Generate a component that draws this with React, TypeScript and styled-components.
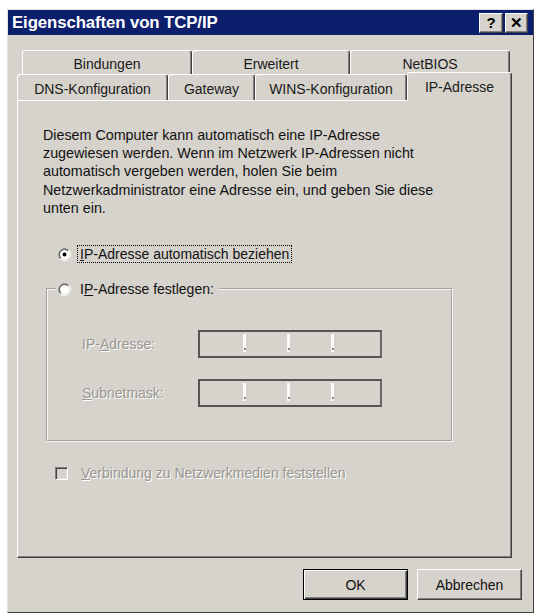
import React from "react";
import styled, { createGlobalStyle } from "styled-components";

const GlobalStyle = createGlobalStyle`
  html, body {
    margin: 0;
    padding: 0;
    background: #fff;
  }
  body {
    font-family: "Liberation Sans", Arial, sans-serif;
    font-size: 14px;
    color: #000;
  }
`;

const face = "#d6d3cc";
const disabledText = "#989691";

const Page = styled.div`
  padding: 9px 0 0 7px;
`;

const Window = styled.div`
  width: 527px;
  height: 604px;
  box-sizing: border-box;
  background: ${face};
  border: 1px solid;
  border-color: #e4e2dc #404040 #404040 #e4e2dc;
  display: flex;
  flex-direction: column;
`;

const TitleBar = styled.div`
  height: 25px;
  flex: none;
  background: #0b1f6d;
  display: flex;
  align-items: center;
  padding: 0 5px 0 4px;
`;

const Title = styled.span`
  flex: 1;
  color: #fff;
  font-weight: bold;
  font-size: 16.8px;
  letter-spacing: -0.1px;
`;

const CaptionButton = styled.button<{ $w: number }>`
  width: ${(p) => p.$w}px;
  height: 20px;
  box-sizing: border-box;
  padding: 0;
  margin-left: 2px;
  background: ${face};
  border: 1px solid;
  border-color: #fff #404040 #404040 #fff;
  box-shadow: inset -1px -1px #808080;
  font-family: "Liberation Sans", Arial, sans-serif;
  font-weight: bold;
  font-size: 15px;
  line-height: 16px;
  color: #000;
`;

const Body = styled.div`
  display: flex;
  flex-direction: column;
  padding: 15px 0 0 9px;
`;

const TabRow = styled.div<{ $indent?: number; $h: number }>`
  display: flex;
  align-items: flex-end;
  height: ${(p) => p.$h}px;
  margin-left: ${(p) => p.$indent ?? 0}px;
`;

const Tab = styled.div<{ $w: number; $h: number; $active?: boolean }>`
  box-sizing: border-box;
  width: ${(p) => p.$w}px;
  height: ${(p) => p.$h}px;
  display: flex;
  align-items: center;
  justify-content: center;
  padding-top: ${(p) => (p.$active ? 0 : 2)}px;
  background: ${face};
  border-top: 1px solid #fff;
  border-left: 1px solid #fff;
  border-right: 1px solid #404040;
  box-shadow: inset -1px 0 #808080;
  border-radius: 3px 3px 0 0;
  position: relative;
  z-index: ${(p) => (p.$active ? 2 : 1)};
  margin-bottom: ${(p) => (p.$active ? -1 : 0)}px;
  white-space: nowrap;
  color: #1a1a1a;
`;

const Panel = styled.div`
  width: 495px;
  height: 458px;
  box-sizing: border-box;
  border: 1px solid;
  border-color: #fff #404040 #404040 #fff;
  box-shadow: inset -1px -1px #808080;
  padding: 25px 20px 0 25px;
`;

const Intro = styled.p`
  margin: 0;
  font-size: 14.3px;
  line-height: 18.2px;
  color: #111;
`;

const OptionRow = styled.div<{ $top?: number; $indent: number; $gap: number }>`
  display: flex;
  align-items: center;
  height: 18px;
  margin-top: ${(p) => p.$top ?? 0}px;
  margin-left: ${(p) => p.$indent}px;
  gap: ${(p) => p.$gap}px;
`;

const OptionLabel = styled.span<{ $focus?: boolean; $disabled?: boolean }>`
  padding: 0 2px;
  line-height: 16px;
  border: 1px dotted ${(p) => (p.$focus ? "#000" : "transparent")};
  color: ${(p) => (p.$disabled ? disabledText : "#111")};
  text-shadow: ${(p) => (p.$disabled ? "1px 1px #fff" : "none")};
  white-space: nowrap;
`;

const Group = styled.fieldset`
  margin: 17px 0 0 3px;
  width: 407px;
  box-sizing: border-box;
  border: 2px groove #f6f6f6;
  padding: 32px 0 33px 8px;
  min-inline-size: 0;
`;

const Legend = styled.legend`
  padding: 0 2px;
`;

const FieldRow = styled.div`
  display: flex;
  align-items: center;
  margin-left: 26px;

  & + & {
    margin-top: 21px;
  }
`;

const FieldLabel = styled.span`
  width: 116px;
  color: ${disabledText};
  text-shadow: 1px 1px #fff;
`;

const IpField = styled.div`
  width: 184px;
  height: 28px;
  box-sizing: border-box;
  border: 2px solid;
  border-color: #555 #666 #555 #555;
  background: ${face};
  display: flex;
  align-items: flex-start;
  padding: 2px 0 0 43px;
  gap: 41px;
`;

const IpDot = styled.span`
  width: 3px;
  height: 18px;
  background: #fbfbfa;
  position: relative;

  &::after {
    content: "";
    position: absolute;
    left: 0.5px;
    bottom: 2px;
    width: 2px;
    height: 2px;
    background: #8a8a8a;
  }
`;

const CheckBox = styled.span`
  width: 13px;
  height: 13px;
  box-sizing: border-box;
  flex: none;
  border: 1px solid;
  border-color: #808080 #fff #fff #808080;
  box-shadow: inset 1px 1px #404040, inset -1px -1px #e0ddd6;
  background: ${face};
`;

const Footer = styled.div`
  display: flex;
  justify-content: flex-end;
  gap: 9px;
  margin-top: 11px;
  padding-right: 11px;
`;

const Button = styled.button<{ $default?: boolean }>`
  width: 105px;
  height: 31px;
  box-sizing: border-box;
  padding: 0;
  background: ${face};
  font-family: "Liberation Sans", Arial, sans-serif;
  font-size: 14px;
  color: #111;
  border: 1px solid;
  border-color: ${(p) => (p.$default ? "#000" : "#fff #404040 #404040 #fff")};
  box-shadow: ${(p) =>
    p.$default
      ? "inset 1px 1px #fff, inset -1px -1px #404040, inset -2px -2px #808080"
      : "inset -1px -1px #808080"};
`;

const Radio: React.FC<{ checked?: boolean }> = ({ checked }) => (
  <svg width="13" height="13" viewBox="0 0 13 13" style={{ flex: "none" }}>
    <circle cx="6.5" cy="6.5" r="6" fill="#fff" />
    <path d="M10.74 2.26 A6 6 0 0 0 2.26 10.74" stroke="#808080" fill="none" />
    <path d="M2.26 10.74 A6 6 0 0 0 10.74 2.26" stroke="#fff" fill="none" />
    <path d="M10.04 2.96 A5 5 0 0 0 2.96 10.04" stroke="#404040" fill="none" />
    <path d="M2.96 10.04 A5 5 0 0 0 10.04 2.96" stroke="#e0ddd6" fill="none" />
    {checked && <circle cx="6.5" cy="6.5" r="2" fill="#000" />}
  </svg>
);

const IpBox: React.FC = () => (
  <IpField>
    <IpDot />
    <IpDot />
    <IpDot />
  </IpField>
);

const App: React.FC = () => {
  return (
    <>
      <GlobalStyle />
      <Page>
        <Window>
          <TitleBar>
            <Title>Eigenschaften von TCP/IP</Title>
            <CaptionButton $w={24}>?</CaptionButton>
            <CaptionButton $w={23}>✕</CaptionButton>
          </TitleBar>
          <Body>
            <TabRow $h={24} $indent={5}>
              <Tab $w={170} $h={24}>Bindungen</Tab>
              <Tab $w={158} $h={24}>Erweitert</Tab>
              <Tab $w={160} $h={24}>NetBIOS</Tab>
            </TabRow>
            <TabRow $h={26}>
              <Tab $w={151} $h={26}>DNS-Konfiguration</Tab>
              <Tab $w={87} $h={26}>Gateway</Tab>
              <Tab $w={152} $h={26}>WINS-Konfiguration</Tab>
              <Tab $w={105} $h={29} $active>
                IP-Adresse
              </Tab>
            </TabRow>
            <Panel>
              <Intro>
                Diesem Computer kann automatisch eine IP-Adresse
                <br />
                zugewiesen werden. Wenn im Netzwerk IP-Adressen nicht
                <br />
                automatisch vergeben werden, holen Sie beim
                <br />
                Netzwerkadministrator eine Adresse ein, und geben Sie diese
                <br />
                unten ein.
              </Intro>
              <OptionRow $top={28} $indent={15} $gap={6}>
                <Radio checked />
                <OptionLabel $focus>
                  <u>I</u>P-Adresse automatisch beziehen
                </OptionLabel>
              </OptionRow>
              <Group>
                <Legend>
                  <OptionRow $indent={0} $gap={6}>
                    <Radio />
                    <OptionLabel>
                      I<u>P</u>-Adresse festlegen:
                    </OptionLabel>
                  </OptionRow>
                </Legend>
                <FieldRow>
                  <FieldLabel>
                    IP-<u>A</u>dresse:
                  </FieldLabel>
                  <IpBox />
                </FieldRow>
                <FieldRow>
                  <FieldLabel>
                    <u>S</u>ubnetmask:
                  </FieldLabel>
                  <IpBox />
                </FieldRow>
              </Group>
              <OptionRow $top={22} $indent={12} $gap={10}>
                <CheckBox />
                <OptionLabel $disabled>
                  <u>V</u>erbindung zu Netzwerkmedien feststellen
                </OptionLabel>
              </OptionRow>
            </Panel>
          </Body>
          <Footer>
            <Button $default>OK</Button>
            <Button>Abbrechen</Button>
          </Footer>
        </Window>
      </Page>
    </>
  );
};

export default App;
